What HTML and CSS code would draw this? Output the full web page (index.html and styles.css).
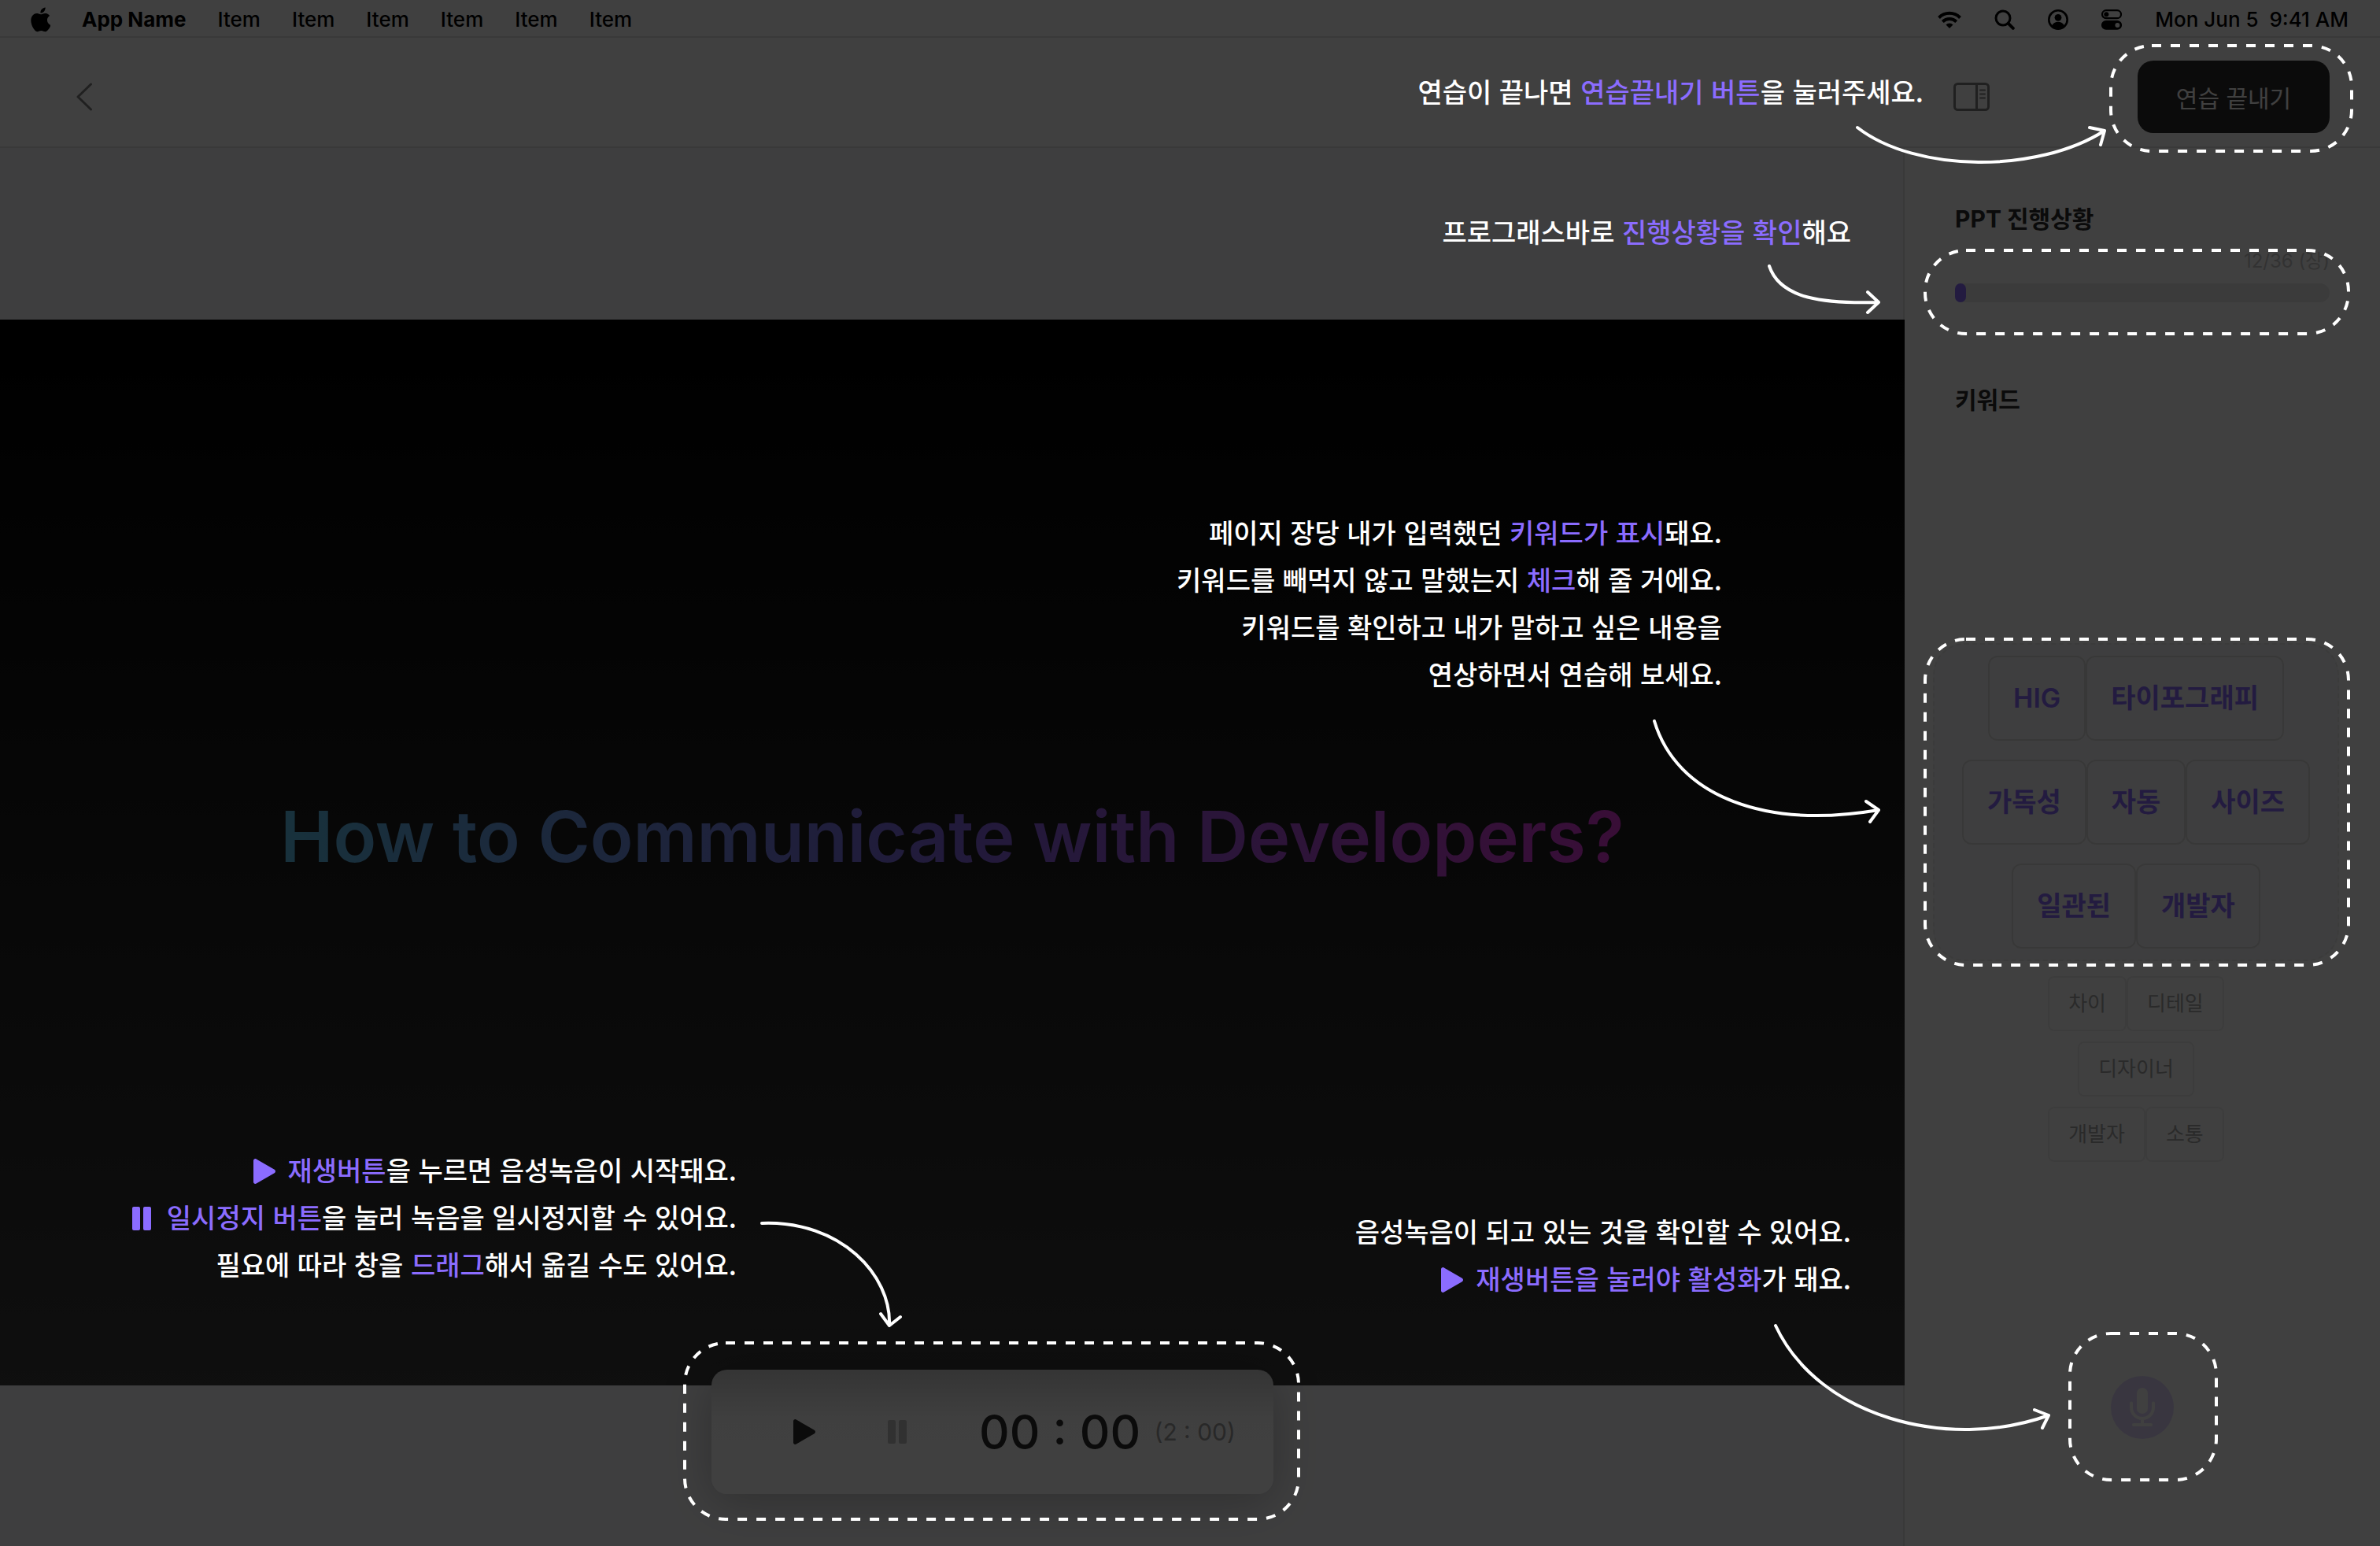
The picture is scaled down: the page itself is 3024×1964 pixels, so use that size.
FILE: index.html
```html
<!DOCTYPE html>
<html lang="ko">
<head>
  <meta charset="utf-8">
  <meta name="viewport" content="width=device-width, initial-scale=1">
  <title>발표 연습</title>
  <link rel="stylesheet" href="styles.css">
</head>
<body>
  <nav class="menubar" aria-label="메뉴 막대">
    <svg class="menubar-apple" viewBox="0 0 26 32" aria-hidden="true"><path d="M21.700 17c0-3.200 2.600-4.800 2.800-4.900-1.600-2.200-3.900-2.600-4.800-2.600-2-.2-4 1.200-5 1.200S12 9.500 10.300 9.600C8.100 9.600 6.100 10.900 4.900 12.800c-2.400 4.100-.6 10.200 1.700 13.500 1.100 1.600 2.500 3.500 4.200 3.400 1.700-.1 2.400-1.100 4.400-1.100s2.700 1.100 4.500 1.100 3-1.700 4.100-3.300c1.300-1.900 1.800-3.700 1.900-3.800-.1 0-3.900-1.500-4-5.600zM18.300 7.300c.9-1.100 1.600-2.700 1.400-4.300-1.400.1-3 .9-4 2-.9 1-1.600 2.600-1.400 4.200 1.500.1 3.100-.8 4-1.900z" transform="translate(-3 -3) scale(1.150)"/></svg>
    <a class="menubar-link menubar-app" href="#">App Name</a>
    <a class="menubar-link" href="#">Item</a>
    <a class="menubar-link" href="#">Item</a>
    <a class="menubar-link" href="#">Item</a>
    <a class="menubar-link" href="#">Item</a>
    <a class="menubar-link" href="#">Item</a>
    <a class="menubar-link" href="#">Item</a>
    <div class="menubar-status">
      <svg class="menubar-wifi" viewBox="0 0 30 22" fill="none" stroke="#000" stroke-width="4" aria-hidden="true"><path d="M1.500 8.500a19 19 0 0 1 27 0"/><path d="M6.300 13.600a12.400 12.400 0 0 1 17.400 0"/><path d="M15 22l-4.500-4.600a6.400 6.400 0 0 1 9 0z" fill="#000" stroke="none"/></svg>
      <svg class="menubar-icon" viewBox="0 0 26 26" fill="none" stroke="#000" stroke-linecap="round" aria-hidden="true"><circle cx="11" cy="11" r="9" stroke-width="3"/><path d="M17.800 17.800l6 6" stroke-width="4"/></svg>
      <svg class="menubar-icon" viewBox="0 0 26 26" aria-hidden="true"><circle cx="13" cy="13" r="11.700" fill="none" stroke="#000" stroke-width="2.600"/><circle cx="13" cy="10.300" r="4.400"/><path d="M5 20.800c1.600-3.600 4.600-5 8-5s6.400 1.400 8 5a11.500 11.500 0 0 1-16 0z"/></svg>
      <svg class="menubar-icon" viewBox="0 0 26 26" aria-hidden="true"><rect x="1" y="1.200" width="24" height="10" rx="5" fill="none" stroke="#000" stroke-width="2.200"/><circle cx="6.300" cy="6.200" r="3"/><path d="M5.800 14h14.400a5.900 5.900 0 0 1 0 11.800H5.800a5.900 5.900 0 0 1 0-11.800zm14.600 2.900a3 3 0 1 0 0 6 3 3 0 0 0 0-6z"/></svg>
      <time class="menubar-clock">Mon Jun 5 &nbsp;9:41 AM</time>
    </div>
  </nav>

  <header class="toolbar">
    <button class="icon-button" type="button" aria-label="뒤로">
      <svg class="icon-back" viewBox="0 0 22 36" fill="none" stroke="currentColor" stroke-width="3" stroke-linecap="round" stroke-linejoin="round"><path d="M19.500 2L3 18l16.500 16"/></svg>
    </button>
    <div class="toolbar-actions">
      <button class="icon-button" type="button" aria-label="사이드바">
        <svg class="icon-panel" viewBox="0 0 46 36" fill="none" stroke="currentColor" stroke-width="3"><rect x="1.500" y="1.500" width="43" height="33" rx="4"/><path d="M29.500 2v32"/><path d="M34 9.500h6M34 14.500h6M34 19.500h6" stroke-width="2" stroke-linecap="round"/></svg>
      </button>
      <button class="finish-button" type="button">연습 끝내기</button>
    </div>
  </header>

  <div class="workspace">
    <main class="stage">
      <section class="slide">
        <h1 class="slide-title">How to Communicate with Developers?</h1>
      </section>
      <div class="player">
        <button class="player-button" type="button" aria-label="재생">
          <svg class="icon-play" viewBox="0 0 28 32" fill="currentColor"><path d="M0 2.600v26.800c0 2 2 3.200 3.700 2.200l23-13.400c1.700-1 1.700-3.400 0-4.400L3.700.4C2-.6 0 .6 0 2.600z"/></svg>
        </button>
        <button class="player-button player-button-muted" type="button" aria-label="일시정지">
          <svg class="icon-pause" viewBox="0 0 24 30" fill="currentColor"><rect width="10" height="30" rx="2"/><rect x="14" width="10" height="30" rx="2"/></svg>
        </button>
        <div class="player-time">
          <span class="player-elapsed">00 : 00</span>
          <span class="player-total">(2 : 00)</span>
        </div>
      </div>
    </main>

    <aside class="sidebar">
      <section class="progress">
        <h2 class="sidebar-title">PPT 진행상황</h2>
        <p class="progress-count">12/36 (장)</p>
        <div class="progress-track"><div class="progress-fill"></div></div>
      </section>
      <h2 class="sidebar-title keyword-title">키워드</h2>
      <section class="keywords">
        <div class="keyword-focus">
          <div class="chip-row"><span class="chip">HIG</span><span class="chip">타이포그래피</span></div>
          <div class="chip-row"><span class="chip">가독성</span><span class="chip">자동</span><span class="chip">사이즈</span></div>
          <div class="chip-row"><span class="chip">일관된</span><span class="chip">개발자</span></div>
        </div>
        <div class="keyword-next">
          <div class="chip-row"><span class="chip chip-small">차이</span><span class="chip chip-small">디테일</span></div>
          <div class="chip-row"><span class="chip chip-small">디자이너</span></div>
          <div class="chip-row"><span class="chip chip-small">개발자</span><span class="chip chip-small">소통</span></div>
        </div>
      </section>
      <button class="mic-button" type="button" aria-label="음성 녹음">
        <svg class="icon-mic" viewBox="0 0 32 50" fill="none" stroke="currentColor" stroke-width="4" stroke-linecap="round"><rect x="9" y="0" width="14" height="33" rx="7" fill="currentColor" stroke="none"/><path d="M2 19.500v5.500a14 14 0 0 0 28 0v-5.500M16 39v8M5 47h22"/></svg>
      </button>
    </aside>
  </div>

  <div class="coach">
    <svg class="coach-marks" viewBox="0 0 3024 1964" aria-hidden="true">
      <g class="coach-boxes">
        <rect x="2682" y="58" width="306" height="134" rx="52"/>
        <rect x="2446" y="318" width="538" height="106" rx="52"/>
        <rect x="2446" y="812" width="538" height="414" rx="52"/>
        <rect x="870" y="1706" width="780" height="224" rx="52"/>
        <rect x="2630" y="1694" width="186" height="186" rx="52"/>
      </g>
      <g class="coach-arrows">
        <path d="M2360 162C2435 220 2590 220 2674 166M2655 162L2674 166L2669 184"/>
        <path d="M2248 338C2262 380 2318 386 2387 384M2373 371L2387 384L2373 397"/>
        <path d="M2102 916C2130 1010 2240 1054 2387 1029M2371 1018L2387 1029L2376 1044"/>
        <path d="M968 1554C1068 1550 1133 1620 1130 1684M1119 1669L1130 1684L1144 1673"/>
        <path d="M2256 1684C2310 1800 2475 1844 2603 1798M2585 1791L2603 1798L2595 1814"/>
      </g>
    </svg>
    <p class="coach-text coach-finish">연습이 끝나면 <em>연습끝내기 버튼</em>을 눌러주세요.</p>
    <p class="coach-text coach-progress">프로그래스바로 <em>진행상황을 확인</em>해요</p>
    <p class="coach-text coach-keyword">페이지 장당 내가 입력했던 <em>키워드가 표시</em>돼요.<br>키워드를 빼먹지 않고 말했는지 <em>체크</em>해 줄 거에요.<br>키워드를 확인하고 내가 말하고 싶은 내용을<br>연상하면서 연습해 보세요.</p>
    <p class="coach-text coach-player"><em><svg class="coach-icon" viewBox="0 0 28 32" fill="currentColor" aria-hidden="true"><path d="M0 2.600v26.800c0 2 2 3.200 3.700 2.200l23-13.400c1.700-1 1.700-3.400 0-4.400L3.700.4C2-.6 0 .6 0 2.600z"/></svg>재생버튼</em>을 누르면 음성녹음이 시작돼요.<br><em><svg class="coach-icon" viewBox="0 0 28 32" fill="currentColor" aria-hidden="true"><rect y="1" width="10" height="30" rx="2"/><rect x="14" y="1" width="10" height="30" rx="2"/></svg>일시정지 버튼</em>을 눌러 녹음을 일시정지할 수 있어요.<br>필요에 따라 창을 <em>드래그</em>해서 옮길 수도 있어요.</p>
    <p class="coach-text coach-mic">음성녹음이 되고 있는 것을 확인할 수 있어요.<br><em><svg class="coach-icon" viewBox="0 0 28 32" fill="currentColor" aria-hidden="true"><path d="M0 2.600v26.800c0 2 2 3.200 3.700 2.200l23-13.400c1.700-1 1.700-3.400 0-4.400L3.700.4C2-.6 0 .6 0 2.600z"/></svg>재생버튼을 눌러야 활성화</em>가 돼요.</p>
  </div>
</body>
</html>
```
FILE: styles.css
```css
* {
  box-sizing: border-box;
}

body {
  position: relative;
  display: flex;
  flex-direction: column;
  min-height: 100vh;
  margin: 0;
  background: #fff;
  color: #2c2c2c;
  font-family: Inter, "Noto Sans CJK KR", sans-serif;
}

h1,
h2,
p {
  margin: 0;
}

button {
  padding: 0;
  border: 0;
  background: none;
  color: inherit;
  font: inherit;
}

svg {
  display: block;
  flex: none;
}

/* Menu bar */
.menubar {
  display: flex;
  align-items: center;
  gap: 40px;
  height: 48px;
  padding: 4px 40px 0 38px;
  border-bottom: 2px solid #e4e4e4;
  color: #000;
  font-size: 26px;
  font-weight: 500;
  line-height: 32px;
}

.menubar-apple {
  width: 26px;
  height: 32px;
}

.menubar-link {
  color: inherit;
  text-decoration: none;
}

.menubar-app {
  font-weight: 700;
}

.menubar-status {
  display: flex;
  align-items: center;
  gap: 42px;
  margin-left: auto;
}

.menubar-wifi {
  width: 30px;
  height: 22px;
}

.menubar-icon {
  width: 26px;
  height: 26px;
}

/* Toolbar */
.toolbar {
  display: flex;
  align-items: center;
  justify-content: space-between;
  height: 140px;
  padding: 12px 64px 0 96px;
  border-bottom: 2px solid #e4e4e4;
}

.toolbar-actions {
  display: flex;
  align-items: center;
  gap: 188px;
}

.icon-button {
  color: #808080;
}

.icon-back {
  width: 22px;
  height: 36px;
}

.icon-panel {
  width: 46px;
  height: 36px;
}

.finish-button {
  width: 244px;
  height: 92px;
  border-radius: 20px;
  background: #2c2c2c;
  color: #fff;
  font-family: "Noto Sans CJK KR", sans-serif;
  font-size: 30px;
}

/* Workspace */
.workspace {
  display: flex;
  flex: 1;
}

.stage {
  position: relative;
  display: flex;
  flex: 1;
  flex-direction: column;
  justify-content: center;
  padding-top: 14px;
  border-right: 2px solid #e4e4e4;
  background: #f8f8fa;
}

.slide {
  display: flex;
  align-items: center;
  justify-content: center;
  aspect-ratio: 2420 / 1354;
  margin-right: -2px;
  padding-bottom: 40px;
  background: linear-gradient(#000, #3c3c3c);
}

.slide-title {
  background: linear-gradient(90deg, #60c4f0, #8468e8 50%, #e038d8);
  background-clip: text;
  color: transparent;
  font-size: 90px;
  font-weight: 600;
  line-height: 120px;
}

.player {
  position: absolute;
  bottom: 66px;
  left: 904px;
  display: flex;
  align-items: center;
  width: 714px;
  height: 158px;
  padding: 0 48px 0 104px;
  border-radius: 20px;
  background: linear-gradient(#d0d0d0, #fcfcfc 40%, #fff);
  box-shadow: 0 10px 60px rgba(0, 0, 0, 0.25);
}

.player-button {
  margin-right: 92px;
}

.player-button-muted {
  color: #c4c4c4;
}

.icon-play {
  width: 28px;
  height: 32px;
}

.icon-pause {
  width: 24px;
  height: 30px;
}

.player-time {
  display: flex;
  align-items: center;
  justify-content: space-between;
  flex: 1;
  white-space: nowrap;
}

.player-elapsed {
  font-size: 60px;
  font-weight: 500;
}

.player-total {
  color: #a0a0a0;
  font-size: 30px;
}

/* Sidebar */
.sidebar {
  display: flex;
  flex-direction: column;
  width: 604px;
  padding: 68px 0 136px;
}

.progress {
  padding: 0 64px;
}

.sidebar-title {
  font-size: 30px;
  font-weight: 700;
  line-height: 44px;
}

.progress-count {
  margin: 16px 0 12px;
  color: #c8c8c8;
  font-size: 24px;
  line-height: 32px;
  text-align: right;
}

.progress-track {
  height: 24px;
  border-radius: 12px;
  background: #ebebeb;
}

.progress-fill {
  width: 14px;
  height: 24px;
  border-radius: 7px;
  background: #8b6cff;
}

.keyword-title {
  margin-top: 102px;
  padding: 0 64px;
}

.keywords {
  display: flex;
  flex-direction: column;
  gap: 19px;
  margin: 287px 52px 0 36px;
}

.keyword-focus {
  display: flex;
  flex-direction: column;
  gap: 24px;
  padding: 14px 0;
  border: 2px dashed #ebebeb;
  border-radius: 40px;
  background: #f8f8fa;
}

.keyword-next {
  display: flex;
  flex-direction: column;
  gap: 13px;
}

.chip-row {
  display: flex;
  justify-content: center;
}

.chip {
  padding: 0 30px;
  border: 2px solid #e0e0e0;
  border-radius: 12px;
  color: #8b6cff;
  font-size: 34px;
  font-weight: 600;
  line-height: 104px;
}

.chip-small {
  padding: 0 24px;
  border-color: #f0f0f0;
  border-radius: 8px;
  color: #a6a6a6;
  font-size: 26px;
  font-weight: 400;
  line-height: 66px;
}

.mic-button {
  display: flex;
  align-items: center;
  justify-content: center;
  width: 80px;
  height: 80px;
  margin: auto auto 0;
  border-radius: 50%;
  background: #e1d8ff;
  color: #fff;
}

.icon-mic {
  width: 32px;
  height: 50px;
}

/* Coach marks over the dimmed screen */
.coach {
  position: absolute;
  inset: 0;
  background: rgba(0, 0, 0, 0.75);
}

.coach-marks {
  width: 100%;
  height: 100%;
}

.coach-boxes,
.coach-arrows {
  fill: none;
  stroke: #fff;
  stroke-width: 4;
}

.coach-boxes {
  stroke-dasharray: 12 12;
}

.coach-arrows {
  stroke-linecap: round;
  stroke-linejoin: round;
}

.coach-text {
  position: absolute;
  color: #fff;
  font-family: "Noto Sans CJK KR", sans-serif;
  font-size: 34px;
  font-weight: 500;
  line-height: 60px;
  text-align: right;
  white-space: nowrap;
}

.coach-text em {
  color: #8b6cff;
  font-style: normal;
}

.coach-icon {
  display: inline-block;
  width: 28px;
  height: 32px;
  margin-right: 16px;
  vertical-align: -4px;
}

.coach-finish {
  top: 86px;
  right: 580px;
}

.coach-progress {
  top: 264px;
  right: 672px;
}

.coach-keyword {
  top: 646px;
  right: 836px;
}

.coach-player {
  top: 1456px;
  right: 2088px;
}

.coach-mic {
  top: 1534px;
  right: 672px;
}
```
